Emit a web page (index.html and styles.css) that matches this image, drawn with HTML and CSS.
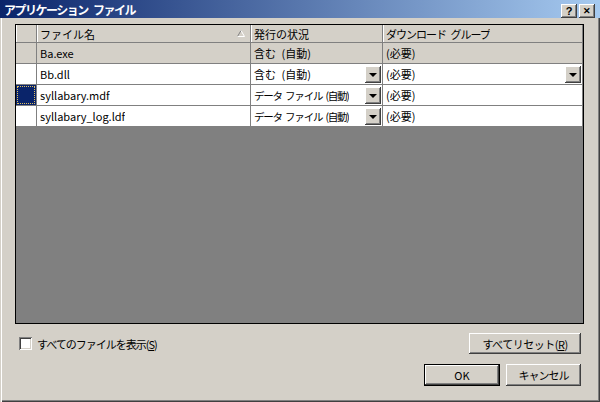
FILE: index.html
```html
<!DOCTYPE html>
<html lang="ja">
<head>
    <meta charset="UTF-8">
    <title>アプリケーション ファイル</title>
    <link rel="stylesheet" href="styles.css">
</head>
<body>
    <div class="window">
        <div class="titlebar">
            <span class="title">アプリケーション ファイル</span>
            <div class="title-buttons">
                <span class="tbtn">?</span>
                <span class="tbtn close">&#10005;</span>
            </div>
        </div>
        <div class="client">
            <div class="grid">
                <div class="row head">
                    <div class="cell rowhead"></div>
                    <div class="cell col-name"><span class="txt">ファイル名</span>
                        <svg class="sort" width="8" height="7" viewBox="0 0 8 7">
                            <path d="M0.5 6.5 L4 0.5" stroke="#808080" fill="none"/>
                            <path d="M4 0.5 L7.5 6.5 L0.5 6.5" stroke="#ffffff" fill="none"/>
                        </svg>
                    </div>
                    <div class="cell col-status"><span class="txt">発行の状況</span></div>
                    <div class="cell col-group"><span class="txt tight">ダウンロード グループ</span></div>
                </div>
                <div class="row readonly">
                    <div class="cell rowhead"></div>
                    <div class="cell col-name"><span class="txt">Ba.exe</span></div>
                    <div class="cell col-status"><span class="txt wide">含む (自動)</span></div>
                    <div class="cell col-group"><span class="txt">(必要)</span></div>
                </div>
                <div class="row">
                    <div class="cell rowhead"></div>
                    <div class="cell col-name"><span class="txt">Bb.dll</span></div>
                    <div class="cell col-status"><span class="txt wide">含む (自動)</span><span class="drop"></span></div>
                    <div class="cell col-group"><span class="txt">(必要)</span><span class="drop"></span></div>
                </div>
                <div class="row">
                    <div class="cell rowhead selected"><span class="focus"></span></div>
                    <div class="cell col-name"><span class="txt">syllabary.mdf</span></div>
                    <div class="cell col-status"><span class="txt tighter">データ ファイル (自動)</span><span class="drop"></span></div>
                    <div class="cell col-group"><span class="txt">(必要)</span></div>
                </div>
                <div class="row">
                    <div class="cell rowhead"></div>
                    <div class="cell col-name"><span class="txt">syllabary_log.ldf</span></div>
                    <div class="cell col-status"><span class="txt tighter">データ ファイル (自動)</span><span class="drop"></span></div>
                    <div class="cell col-group"><span class="txt">(必要)</span></div>
                </div>
            </div>
            <div class="options">
                <label class="check"><span class="box"></span><span class="tight">すべてのファイルを表示(<u>S</u>)</span></label>
                <button class="btn reset"><span class="semi">すべてリセット(<u>R</u>)</span></button>
            </div>
            <div class="actions">
                <button class="btn default">OK</button>
                <button class="btn"><span class="tight">キャンセル</span></button>
            </div>
        </div>
    </div>
</body>
</html>
```

FILE: styles.css
```css
body {
    margin: 0;
    padding: 0;
    font-family: "Noto Sans CJK JP", "Liberation Sans", sans-serif;
    font-size: 11px;
    color: #000;
}

.tight {
    letter-spacing: -1px;
    word-spacing: 3px;
}

.tighter {
    font-size: 10.5px;
    letter-spacing: -1.2px;
    word-spacing: 2px;
}

.wide {
    word-spacing: 3px;
}

.semi {
    letter-spacing: -0.5px;
}

.window {
    width: 600px;
    height: 402px;
    box-sizing: border-box;
    background: #d4d0c8;
    box-shadow: inset 1px 0 #d4d0c8, inset 2px 0 #ffffff,
                inset -1px -1px #404040, inset -2px -2px #808080;
    overflow: hidden;
}

.titlebar {
    height: 18px;
    background: linear-gradient(to right, #0a246a, #a6caf0);
    display: flex;
    align-items: center;
    justify-content: space-between;
    padding: 0 5px 0 4px;
}

.title {
    color: #fff;
    font-weight: bold;
    font-size: 12px;
    letter-spacing: -1.5px;
    word-spacing: 4px;
    line-height: 18px;
    margin-top: 2px;
}

.title-buttons {
    display: flex;
    gap: 2px;
    margin-top: 3px;
}

.tbtn {
    width: 16px;
    height: 14px;
    box-sizing: border-box;
    background: #d4d0c8;
    box-shadow: inset -1px -1px #404040, inset 1px 1px #ffffff, inset -2px -2px #808080;
    font-family: "Liberation Sans", sans-serif;
    font-weight: bold;
    font-size: 11px;
    line-height: 14px;
    text-align: center;
}

.tbtn.close {
    font-size: 9px;
}

.client {
    padding: 6px 0 0 15px;
}

.grid {
    width: 569px;
    height: 300px;
    box-sizing: border-box;
    border: 1px solid #000;
    background: #808080;
}

.row {
    display: flex;
    height: 21px;
    background: #fff;
}

.row.head {
    height: 18px;
    background: #d4d0c8;
}

.row.readonly {
    background: #d4d0c8;
}

.cell {
    box-sizing: border-box;
    border-right: 1px solid #808080;
    border-bottom: 1px solid #808080;
    display: flex;
    align-items: center;
    justify-content: space-between;
    padding-left: 3px;
    white-space: nowrap;
    overflow: hidden;
}

.txt {
    overflow: hidden;
}

.head .cell {
    box-shadow: inset 1px 0 #ffffff;
}

.rowhead {
    width: 21px;
    padding: 0;
}

.head .rowhead,
.readonly .rowhead {
    background: #d4d0c8;
}

.rowhead.selected {
    background: #0a246a;
    padding: 1px;
}

.focus {
    display: block;
    width: 100%;
    height: 100%;
    box-sizing: border-box;
    border: 1px dotted #e0c060;
}

.col-name {
    width: 214px;
}

.col-status {
    width: 132px;
}

.col-group {
    width: 200px;
}

.sort {
    margin-right: 5px;
    flex-shrink: 0;
}

.drop {
    width: 16px;
    height: 17px;
    flex-shrink: 0;
    box-sizing: border-box;
    margin-right: 1px;
    background: #d4d0c8;
    box-shadow: inset -1px -1px #404040, inset 1px 1px #ffffff, inset -2px -2px #808080;
    display: flex;
    align-items: center;
    justify-content: center;
}

.drop::after {
    content: "";
    border-left: 4px solid transparent;
    border-right: 4px solid transparent;
    border-top: 4px solid #000;
    margin-top: 1px;
}

.options {
    display: flex;
    justify-content: space-between;
    align-items: center;
    width: 566px;
    box-sizing: border-box;
    margin-top: 9px;
    padding-left: 4px;
}

.check {
    display: flex;
    align-items: center;
    gap: 5px;
}

.box {
    width: 13px;
    height: 13px;
    box-sizing: border-box;
    background: #fff;
    box-shadow: inset 1px 1px #808080, inset -1px -1px #ffffff,
                inset 2px 2px #404040, inset -2px -2px #d4d0c8;
}

.btn {
    font-family: inherit;
    font-size: 11px;
    background: #d4d0c8;
    border: none;
    padding: 0;
    height: 21px;
    box-sizing: border-box;
    box-shadow: inset -1px -1px #404040, inset 1px 1px #ffffff, inset -2px -2px #808080;
    color: #000;
}

.btn.reset {
    width: 112px;
}

.actions {
    display: flex;
    justify-content: flex-end;
    gap: 6px;
    width: 566px;
    margin-top: 10px;
}

.actions .btn {
    width: 75px;
    height: 22px;
}

.actions .btn.default {
    width: 76px;
    border: 1px solid #000;
}
```
